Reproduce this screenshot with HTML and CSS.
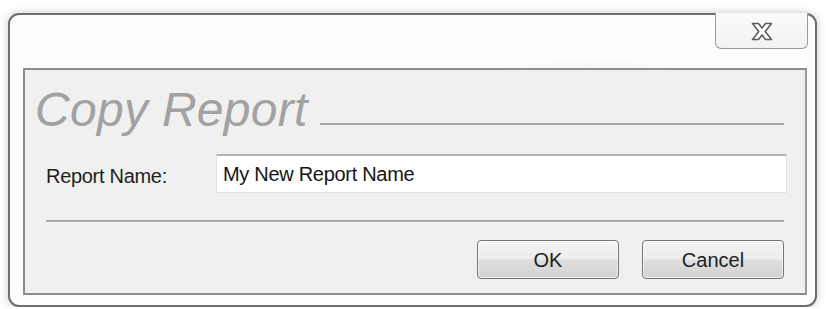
FILE: index.html
```html
<!doctype html>
<html>
  <head>
    <title>Copy Report</title>
    <link rel="stylesheet" href="styles.css">
  </head>

  <body>
    <div class="window">
      <div class="caption">
        <button class="close" type="button">
          <svg width="22" height="19" viewBox="0 0 22 19">
            <polygon
              points="1.5,1.5 7.5,1.5 11,6 14.5,1.5 20.5,1.5 14.2,9.5 20.5,17.5 14.5,17.5 11,13 7.5,17.5 1.5,17.5 7.8,9.5"
              fill="#fff"
              stroke="#5e5e5e"
              stroke-width="1.6"
              stroke-linejoin="round"
            />
          </svg>
        </button>
      </div>
      <div class="panel">
        <div class="title_row">
          <span class="title">Copy Report</span>
          <span class="title_line"></span>
        </div>
        <div class="field_row">
          <label class="field_label" for="name">Report Name:</label>
          <input id="name" class="field_input" type="text" value="My New Report Name" />
        </div>
        <div class="separator"></div>
        <div class="actions">
          <button type="button" class="btn">OK</button>
          <button type="button" class="btn">Cancel</button>
        </div>
      </div>
    </div>
  </body>
</html>
```

FILE: styles.css
```css
body {
  margin: 0;
  background-color: #fff;
  font-family: "Liberation Sans", Arial, sans-serif;
}

.window {
  margin: 13px 0 0 8px;
  width: 805px;
  height: 290px;
  border: 2px solid #6e6e6e;
  border-radius: 11px;
  background:
    radial-gradient(ellipse 140px 45px at 72% 30%, #e6e6e6, rgba(255, 255, 255, 0)),
    #fdfdfd;
  box-shadow: 0 0 9px rgba(0, 0, 0, 0.22);
  display: flex;
  flex-direction: column;
}

.caption {
  display: flex;
  justify-content: flex-end;
  height: 53px;
  padding-right: 7px;
}

.close {
  width: 93px;
  height: 36px;
  margin-top: -2px;
  padding: 0;
  border: 1px solid #9a9a9a;
  border-top: none;
  border-radius: 0 0 6px 6px;
  background: linear-gradient(180deg, #fbfbfb 0%, #f1f1f1 100%);
  display: flex;
  align-items: center;
  justify-content: center;
}

.close svg {
  display: block;
  margin-top: 1px;
}

.panel {
  margin: 0 8px 10px 13px;
  flex: 1;
  border: 2px solid #8c8c8c;
  border-right-color: #9a9a9a;
  background-color: #f0f0f0;
  padding: 12px 21px 14px 21px;
  display: flex;
  flex-direction: column;
}

.title_row {
  display: flex;
  align-items: flex-end;
  margin-left: -11px;
  height: 56px;
}

.title {
  font-size: 48px;
  line-height: 56px;
  font-style: italic;
  color: #a2a2a2;
  white-space: nowrap;
  letter-spacing: 0.3px;
}

.title_line {
  flex: 1;
  height: 0;
  margin-left: 12px;
  margin-bottom: 13px;
  border-top: 2px solid #a8a8a8;
}

.field_row {
  display: flex;
  align-items: center;
  margin-top: 16px;
}

.field_label {
  width: 170px;
  font-size: 20px;
  letter-spacing: -0.3px;
  color: #1e1e1e;
  padding-top: 6px;
}

.field_input {
  flex: 1;
  height: 39px;
  box-sizing: border-box;
  margin: 0 -3px 0 0;
  padding: 1px 6px 0 6px;
  border: 1px solid #e3e3e3;
  border-top: 2px solid #b4b4b4;
  background-color: #fff;
  font-family: "Liberation Sans", Arial, sans-serif;
  font-size: 20px;
  letter-spacing: -0.3px;
  color: #151515;
  outline: none;
}

.separator {
  margin-top: 27px;
  height: 0;
  border-top: 2px solid #a9a9a9;
  border-bottom: 1px solid #fff;
}

.actions {
  display: flex;
  justify-content: flex-end;
  gap: 23px;
  margin-top: 17px;
}

.btn {
  width: 142px;
  height: 39px;
  border: 1px solid #747474;
  border-radius: 4px;
  background: linear-gradient(180deg, #f4f4f4 0%, #ececec 48%, #dedede 52%, #d2d2d2 100%);
  box-shadow: inset 0 0 0 1px rgba(255, 255, 255, 0.7);
  font-family: "Liberation Sans", Arial, sans-serif;
  font-size: 20px;
  color: #202020;
  padding: 2px 0 0 0;
}
```
